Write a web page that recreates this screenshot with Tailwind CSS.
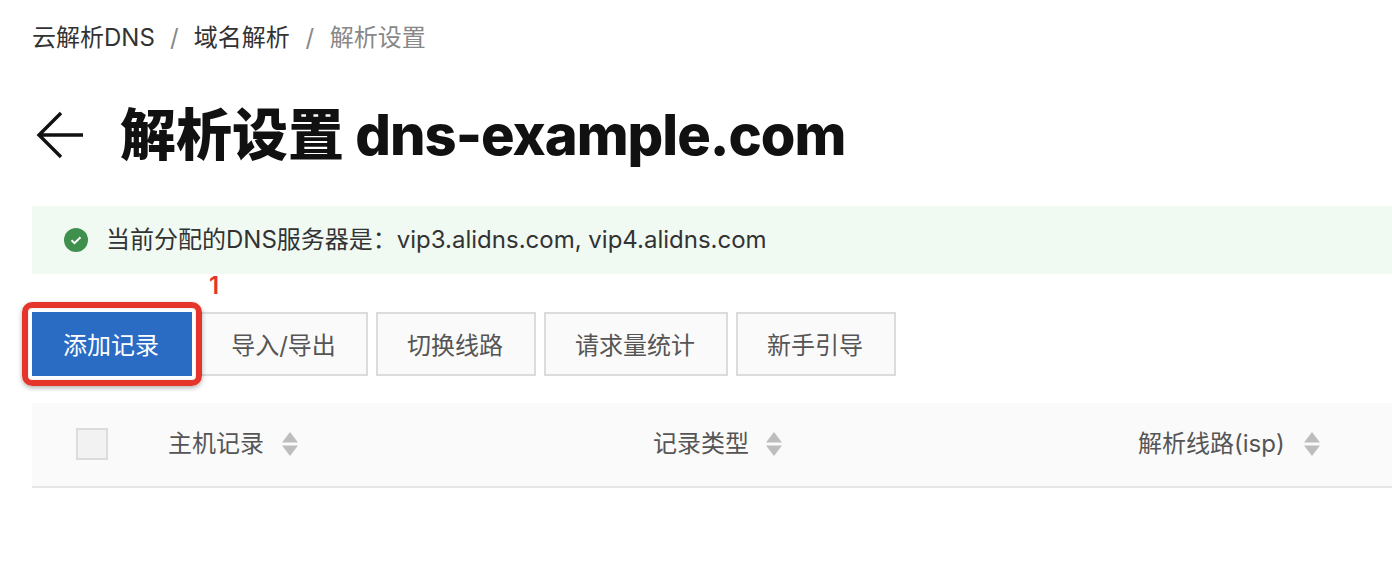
<!DOCTYPE html>
<html lang="zh"><head><meta charset="utf-8">
<script src="https://cdn.jsdelivr.net/npm/@tailwindcss/browser@4"></script>
</head>
<body class="bg-white overflow-hidden">
<div class="w-[1392px] h-[580px] overflow-hidden pl-[32px] font-['Inter','Noto_Sans_CJK_SC',sans-serif]">
  <nav class="h-[76px] flex items-center text-[24px] leading-[32px] text-[#333]">
    <span>云解析DNS</span><span class="w-[39px] text-center text-[#888]">/</span>
    <span>域名解析</span><span class="w-[40px] text-center text-[#888]">/</span>
    <span class="text-[#888]">解析设置</span>
  </nav>
  <header class="h-[130px] flex items-center pb-[12px]">
    <svg class="w-[48px] h-[48px] ml-[4px]" viewBox="0 0 48 48" fill="none" stroke="#111" stroke-width="3.4"><path d="M47 24H3M25 2 3 24l22 22"/></svg>
    <h1 class="ml-[36px] text-[56px] leading-[64px] font-extrabold text-[#111] tracking-[-1px]"><span class="tracking-normal">解析设置</span> dns-example.com</h1>
  </header>
  <div class="h-[68px] bg-[#f0faf3] flex items-center pl-[32px] text-[24px] text-[#333]">
    <svg class="w-[24px] h-[24px] mr-[18px]" viewBox="0 0 24 24"><circle cx="12" cy="12" r="12" fill="#3f8f4d"/><path d="M7.500 12.200l3 3 6-6" fill="none" stroke="#fff" stroke-width="2"/></svg>
    <span>当前分配的DNS服务器是：vip3.alidns.com, vip4.alidns.com</span>
  </div>
  <div class="relative mt-[38px] flex gap-[8px] text-[24px]">
    <span class="absolute left-[177px] -top-[42px] text-[#e5352b] leading-[32px] font-semibold">1</span>
    <button class="w-[160px] h-[64px] pt-[4px] pr-[2px] bg-[#2a6bc4] text-white">添加记录</button>
    <button class="w-[168px] h-[64px] pt-[3px] pr-[1px] bg-[#fafafa] border-2 border-[#dcdcdc] text-[#555]">导入/导出</button>
    <button class="w-[160px] h-[64px] pt-[3px] pr-[2px] bg-[#fafafa] border-2 border-[#dcdcdc] text-[#555]">切换线路</button>
    <button class="w-[184px] h-[64px] pt-[3px] pr-[2px] bg-[#fafafa] border-2 border-[#dcdcdc] text-[#555]">请求量统计</button>
    <button class="w-[160px] h-[64px] pt-[3px] pr-[2px] bg-[#fafafa] border-2 border-[#dcdcdc] text-[#555]">新手引导</button>
    <div class="absolute -left-[10px] -top-[10px] w-[180px] h-[84px] border-[6px] border-[#e5352b] rounded-[10px] shadow-[0_2px_5px_rgba(0,0,0,0.3),inset_0_0_2px_rgba(0,0,0,0.2)]"></div>
  </div>
  <div class="mt-[27px] h-[85px] bg-[#fafafa] border-b-2 border-[#e6e6e6] flex items-center text-[24px] text-[#555] pb-[2px]">
    <div class="w-[136px] pl-[44px]"><div class="w-[32px] h-[32px] bg-[#f2f2f2] border-2 border-[#dcdcdc]"></div></div>
    <div class="w-[485px] flex items-center gap-[18px]"><span>主机记录</span><svg class="w-[16px] h-[24px]" viewBox="0 0 16 24" fill="#bdbdbd"><path d="M8 0l8 10.500H0zM8 24L0 13.500h16z"/></svg></div>
    <div class="w-[485px] flex items-center gap-[17px]"><span>记录类型</span><svg class="w-[16px] h-[24px]" viewBox="0 0 16 24" fill="#bdbdbd"><path d="M8 0l8 10.500H0zM8 24L0 13.500h16z"/></svg></div>
    <div class="flex items-center gap-[19px]"><span>解析线路(isp)</span><svg class="w-[16px] h-[24px]" viewBox="0 0 16 24" fill="#bdbdbd"><path d="M8 0l8 10.500H0zM8 24L0 13.500h16z"/></svg></div>
  </div>
</div>
</body></html>
